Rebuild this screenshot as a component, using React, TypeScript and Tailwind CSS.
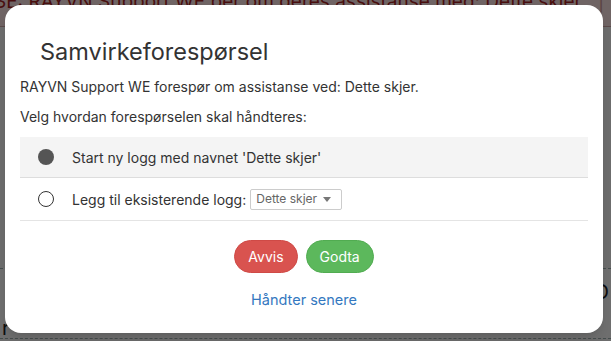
import React from 'react'

const font = { fontFamily: 'Inter, "Noto Sans", sans-serif' }

function Radio({ checked }: { checked: boolean }) {
  return checked ? (
    <span className="block w-4 h-4 rounded-full bg-[#555555]" />
  ) : (
    <span className="block w-4 h-4 rounded-full border-[1.5px] border-[#333333] bg-white" />
  )
}

function Backdrop() {
  return (
    <div className="absolute inset-0 flex flex-col bg-[#f2f2f2]">
      <div className="h-[27px] bg-[#f6dede] border-b border-[#c9a5a5] overflow-hidden whitespace-nowrap">
        <div className="-mt-[12px] -ml-[6px] text-[19px] text-[#a31f1f]">
          SE: RAYVN Support WE ber om deres assistanse med: Dette skjer.
          <span className="ml-3 mr-2 text-[#c99]">|</span>Håndter forespørsel
        </div>
      </div>
      <div className="flex-1" />
      <div className="h-[70px] border-t border-dashed border-[#9aa] bg-[#f7f7f7] flex justify-between items-start px-[2px]">
        <span className="mt-[44px] text-[20px] text-[#222]">r</span>
        <span className="mt-[8px] text-[20px] text-[#222]">D</span>
      </div>
      <div className="h-[3px] border-t border-dashed border-[#9aa]" />
    </div>
  )
}

export default function App() {
  return (
    <div className="relative w-[611px] h-[341px] overflow-hidden" style={font}>
      <Backdrop />
      <div className="absolute inset-0 bg-black/55" />
      <div className="absolute left-[5px] top-[5px] w-[598px] h-[328px] bg-white rounded-[16px] shadow-lg text-[#333333] px-[15px]">
        <h4 className="pl-[20px] pt-[31px] text-[23.5px] leading-[32px] font-normal text-[#333]">
          Samvirkeforespørsel
        </h4>
        <p className="mt-[9px] text-[14px] leading-[20px]">
          RAYVN Support WE forespør om assistanse ved: Dette skjer.
        </p>
        <p className="mt-[10px] text-[14px] leading-[20px]">Velg hvordan forespørselen skal håndteres:</p>
        <div className="mt-[10px] text-[14px]">
          <div className="h-[41px] bg-[#f4f4f4] border-b border-[#dddddd] flex items-center pl-[18px] gap-[18px]">
            <Radio checked />
            <span>Start ny logg med navnet 'Dette skjer'</span>
          </div>
          <div className="h-[43px] border-b border-[#e4e4e4] flex items-center pl-[18px] gap-[18px]">
            <Radio checked={false} />
            <span className="flex items-center gap-[4px]">
              Legg til eksisterende logg:
              <span className="h-[21px] w-[92px] border border-[#cccccc] rounded-[2px] flex items-center pl-[5px] gap-[6px] text-[12px] text-[#666]">
                Dette skjer
                <svg width="8" height="5" viewBox="0 0 8 5">
                  <path d="M0 0h8L4 5z" fill="#777" />
                </svg>
              </span>
            </span>
          </div>
        </div>
        <div className="mt-[19px] flex justify-center gap-[8px]">
          <button className="h-[33px] px-[13px] rounded-full bg-[#d9534f] border border-[#cf4a46] text-white text-[14px]">
            Avvis
          </button>
          <button className="h-[33px] px-[13px] rounded-full bg-[#5cb85c] border border-[#51ac51] text-white text-[14px]">
            Godta
          </button>
        </div>
        <div className="mt-[17px] flex justify-center">
          <a className="text-[14.5px] leading-[20px] text-[#3478c0]">Håndter senere</a>
        </div>
      </div>
    </div>
  )
}
